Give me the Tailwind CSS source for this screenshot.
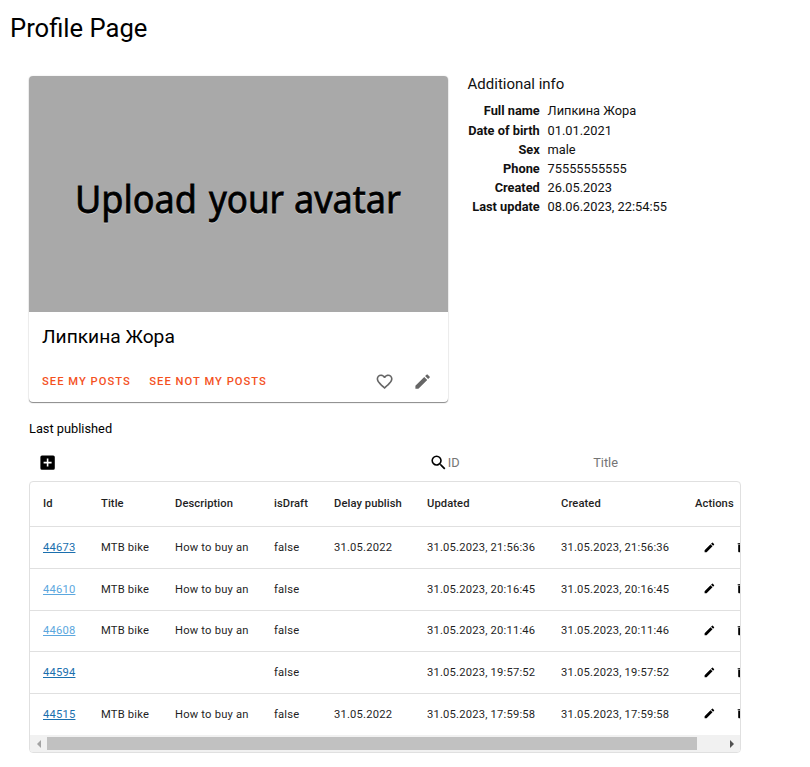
<!DOCTYPE html>
<html lang="en">
<head>
<meta charset="utf-8">
<title>Profile Page</title>
<script src="https://cdn.jsdelivr.net/npm/@tailwindcss/browser@4"></script>
</head>
<body class="h-[767px] overflow-hidden bg-white font-[Roboto,sans-serif] text-[12.8px] leading-[19.2px] text-black">
<svg class="hidden">
  <symbol id="pencil" viewBox="0 0 24 24"><path d="M3 17.25V21h3.75L17.81 9.94l-3.75-3.75L3 17.25zM20.71 7.04a1 1 0 0 0 0-1.41l-2.34-2.34a1 1 0 0 0-1.41 0l-1.83 1.83 3.75 3.75 1.83-1.83z"/></symbol>
  <symbol id="trash" viewBox="0 0 24 24"><path d="M6 19c0 1.1.9 2 2 2h8c1.1 0 2-.9 2-2V7H6v12zM19 4h-3.5l-1-1h-5l-1 1H5v2h14V4z"/></symbol>
</svg>
<h1 class="pt-[9px] pl-[10px] text-[25.6px] leading-[38px] whitespace-nowrap">Profile Page</h1>
<main class="ml-[29px] pt-[29px]">
  <div class="flex items-start">
    <section class="h-[326px] w-[419px] shrink-0 rounded-[4px] bg-white shadow-[0_1px_1px_0_rgba(0,0,0,0.45),0_0_2px_0_rgba(0,0,0,0.13)]">
      <div class="h-[236px] rounded-t-[4px] bg-[#a9a9a9]">
        <svg class="block h-[236px] w-[419px]" viewBox="0 0 419 236" font-family="Noto Sans, sans-serif" font-size="38" stroke-width="0.8">
          <g fill="#c8c8c8" stroke="#c8c8c8">
            <text x="46" y="137.5" textLength="122" lengthAdjust="spacingAndGlyphs">Upload</text>
            <text x="180" y="137.5" textLength="75" lengthAdjust="spacingAndGlyphs">your</text>
            <text x="265" y="137.5" textLength="107" lengthAdjust="spacingAndGlyphs">avatar</text>
          </g>
          <g fill="#000" stroke="#000">
            <text x="46" y="136.5" textLength="122" lengthAdjust="spacingAndGlyphs">Upload</text>
            <text x="180" y="136.5" textLength="75" lengthAdjust="spacingAndGlyphs">your</text>
            <text x="265" y="136.5" textLength="107" lengthAdjust="spacingAndGlyphs">avatar</text>
          </g>
        </svg>
      </div>
      <h2 class="pt-[11px] pl-[13px] text-[19.2px] leading-[28px]">Липкина Жора</h2>
      <div class="flex h-[28px] items-center pt-[17px] pl-[13px] box-content text-[11.2px] font-medium tracking-[1.02px] text-[#f4511e]">
        <span>SEE MY POSTS</span>
        <span class="ml-[18.5px]">SEE NOT MY POSTS</span>
        <div class="ml-auto flex items-center gap-[19.5px] pr-[15.5px] text-[#666]">
          <svg class="size-[19.2px]" viewBox="0 0 24 24" fill="currentColor"><path d="M16.5 3c-1.74 0-3.41.81-4.5 2.09C10.91 3.81 9.24 3 7.5 3 4.42 3 2 5.42 2 8.5c0 3.78 3.4 6.86 8.55 11.54L12 21.35l1.45-1.32C18.6 15.36 22 12.28 22 8.5 22 5.42 19.58 3 16.5 3zm-4.4 15.55l-.1.1-.1-.1C7.14 14.24 4 11.39 4 8.5 4 6.5 5.5 5 7.5 5c1.54 0 3.04.99 3.57 2.36h1.87C13.46 5.99 14.96 5 16.5 5c2 0 3.5 1.5 3.5 3.5 0 2.89-3.14 5.74-7.9 10.05z"/></svg>
          <svg class="size-[19.2px]" fill="currentColor"><use href="#pencil"/></svg>
        </div>
      </div>
    </section>
    <section class="ml-[19.6px] text-[#111]">
      <h3 class="mt-[-3px] mb-[6.4px] text-[14.98px] leading-[22px]">Additional info</h3>
      <dl class="grid grid-cols-[72.2px_auto] gap-x-[7.8px] whitespace-nowrap">
        <dt class="text-right font-bold">Full name</dt><dd>Липкина Жора</dd>
        <dt class="text-right font-bold">Date of birth</dt><dd>01.01.2021</dd>
        <dt class="text-right font-bold">Sex</dt><dd>male</dd>
        <dt class="text-right font-bold">Phone</dt><dd>75555555555</dd>
        <dt class="text-right font-bold">Created</dt><dd>26.05.2023</dd>
        <dt class="text-right font-bold">Last update</dt><dd>08.06.2023, 22:54:55</dd>
      </dl>
    </section>
  </div>
  <h3 class="mt-[17px]">Last published</h3>
  <div class="mt-[14px] flex h-[20px] items-center">
    <svg class="ml-[9.4px] size-[19.2px]" viewBox="0 0 24 24"><path d="M19 3H5a2 2 0 0 0-2 2v14a2 2 0 0 0 2 2h14a2 2 0 0 0 2-2V5a2 2 0 0 0-2-2zm-2 10h-4v4h-2v-4H7v-2h4V7h2v4h4v2z"/></svg>
    <svg class="ml-[371px] size-[19.2px]" viewBox="0 0 24 24"><path d="M15.5 14h-.79l-.28-.27A6.47 6.47 0 0 0 16 9.5 6.5 6.5 0 1 0 9.5 16c1.61 0 3.09-.59 4.23-1.57l.27.28v.79l5 4.99L20.49 19l-4.99-5zm-6 0C7.01 14 5 11.99 5 9.5S7.01 5 9.5 5 14 7.01 14 9.5 11.99 14 9.5 14z"/></svg>
    <span class="w-[145.4px] text-[#757575]">ID</span>
    <span class="text-[#757575]">Title</span>
  </div>
  <div class="mt-[9px] h-[272px] w-[712px] overflow-hidden rounded-[4px] border border-[#e0e0e0]">
    <div class="h-[253px] overflow-hidden text-[11.2px] whitespace-nowrap text-[#1f1f1f]">
      <div class="grid h-[44.4px] grid-cols-[58px_74px_99px_60px_93px_134px_134px_130px] items-center pb-[2px] pl-[13px] font-medium tracking-[0.08px]">
        <span>Id</span><span>Title</span><span>Description</span><span>isDraft</span><span>Delay publish</span><span>Updated</span><span>Created</span><span>Actions</span>
      </div>
      <div id="rows" class="mt-[-0.3px]"></div>
    </div>
    <div class="flex h-[17px] items-center bg-[#f1f1f1]">
      <div class="flex w-[17px] justify-center"><svg class="h-[8px] w-[4px]" viewBox="0 0 4 8" fill="#a3a3a3"><path d="M4 0v8L0 4z"/></svg></div>
      <div class="h-[13px] w-[650px] bg-[#c1c1c1]"></div>
      <div class="ml-auto flex w-[17px] justify-center"><svg class="h-[8px] w-[4px]" viewBox="0 0 4 8" fill="#505050"><path d="M0 0v8l4-4z"/></svg></div>
    </div>
  </div>
</main>
<script>
const posts = [
  ['44673', 'MTB bike', 'How to buy an', '31.05.2022', '31.05.2023, 21:56:36', 'text-[#1a6fae]'],
  ['44610', 'MTB bike', 'How to buy an', '', '31.05.2023, 20:16:45', 'text-[#5ba7de]'],
  ['44608', 'MTB bike', 'How to buy an', '', '31.05.2023, 20:11:46', 'text-[#5ba7de]'],
  ['44594', '', '', '', '31.05.2023, 19:57:52', 'text-[#1a6fae]'],
  ['44515', 'MTB bike', 'How to buy an', '31.05.2022', '31.05.2023, 17:59:58', 'text-[#1a6fae]'],
];
document.getElementById('rows').innerHTML = posts.map(([id, title, text, delay, date, color]) => `
  <div class="grid h-[41.7px] grid-cols-[58px_74px_99px_60px_93px_134px_134px_130px] items-center border-t border-[#e0e0e0] pl-[13px] tracking-[0.2px]">
    <span class="${color} underline">${id}</span><span>${title}</span><span>${text}</span><span>false</span><span>${delay}</span><span>${date}</span><span>${date}</span>
    <span class="flex gap-[19.2px] pb-[1px] pl-[7.6px]"><svg class="size-[12.8px]"><use href="#pencil"/></svg><svg class="size-[12.8px]"><use href="#trash"/></svg></span>
  </div>`).join('');
</script>
</body>
</html>
